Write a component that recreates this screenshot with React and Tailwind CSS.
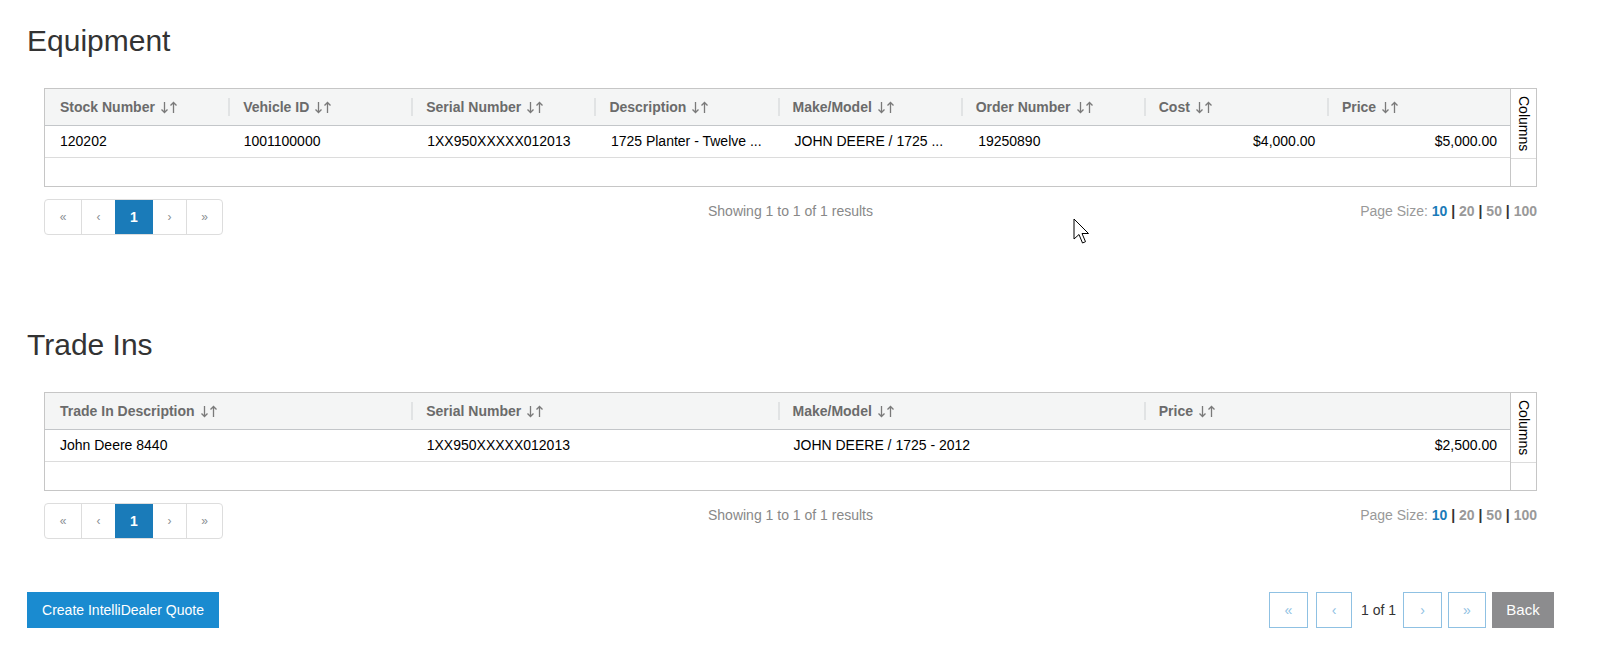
const equipCols = ["Stock Number", "Vehicle ID", "Serial Number", "Description", "Make/Model", "Order Number", "Cost", "Price"];
const equipRow = [
  { v: "120202" },
  { v: "1001100000" },
  { v: "1XX950XXXXX012013" },
  { v: "1725 Planter - Twelve ..." },
  { v: "JOHN DEERE / 1725 ..." },
  { v: "19250890" },
  { v: "$4,000.00", right: true },
  { v: "$5,000.00", right: true },
];

const tradeCols = ["Trade In Description", "Serial Number", "Make/Model", "Price"];
const tradeRow = [
  { v: "John Deere 8440" },
  { v: "1XX950XXXXX012013" },
  { v: "JOHN DEERE / 1725 - 2012" },
  { v: "$2,500.00", right: true },
];

function SortIcon() {
  return (
    <svg className="ml-[5px]" width="18" height="13" viewBox="0 0 18 13" fill="none" stroke="#7a7a7a" strokeWidth="1.3">
      <path d="M4.5 1 V11.5 M1.5 8.5 L4.5 11.5 L7.5 8.5" />
      <path d="M13.5 12 V1.5 M10.5 4.5 L13.5 1.5 L16.5 4.5" />
    </svg>
  );
}

function DataTable({ cols, row }) {
  return (
    <div className="mx-[17px] flex border border-[#c6c6c6]">
      <div className="min-w-0 flex-1">
        <div className="flex h-[37px] border-b border-[#c3c6c9] bg-[#f4f5f5]">
          {cols.map((c, i) => (
            <div key={c} className="flex min-w-0 flex-1 items-center">
              <div
                className={
                  "flex h-[18px] items-center border-l-2 pl-[13px] text-[14px] font-bold text-[#6b6b6b] " +
                  (i === 0 ? "border-transparent" : "border-[#e1e3e4]")
                }
              >
                {c}
                <SortIcon />
              </div>
            </div>
          ))}
        </div>
        <div className="flex h-[32px] border-b border-[#dcdcdc]">
          {row.map((cell, i) => (
            <div
              key={i}
              className={
                "flex min-w-0 flex-1 items-center text-[14px] text-black " +
                (cell.right ? "justify-end pr-[13px]" : "pl-[15px]")
              }
            >
              <span className="whitespace-nowrap">{cell.v}</span>
            </div>
          ))}
        </div>
        <div className="h-[28px]" />
      </div>
      <div className="flex w-[26px] flex-col border-l border-[#c6c6c6]">
        <div className="flex h-[70px] justify-center border-b border-[#dcdcdc] pt-[7px]">
          <span className="text-[14px] leading-none text-black [writing-mode:vertical-rl]">Columns</span>
        </div>
        <div className="flex-1" />
      </div>
    </div>
  );
}

function Pager() {
  const btn = "flex h-[34px] items-center justify-center text-[12px] text-[#8a8f94]";
  return (
    <div className="flex w-fit overflow-hidden rounded-[4px] border border-[#dddddd]">
      <div className={btn + " w-[36px]"}>«</div>
      <div className={btn + " w-[34px] border-l border-[#dddddd]"}>‹</div>
      <div className="flex h-[34px] w-[38px] items-center justify-center bg-[#1a7bb9] text-[14px] font-bold text-white">1</div>
      <div className={btn + " w-[33px]"}>›</div>
      <div className={btn + " w-[36px] border-l border-[#dddddd]"}>»</div>
    </div>
  );
}

function PagerRow() {
  return (
    <div className="mx-[17px] mt-[12px] grid grid-cols-3 items-start">
      <Pager />
      <div className="pt-[2px] text-center text-[14px] text-[#888]">Showing 1 to 1 of 1 results</div>
      <div className="pt-[2px] text-right text-[14px] text-[#999]">
        Page Size: <span className="font-bold text-[#1a7bb9]">10</span>
        <span className="font-bold text-[#333]"> | </span>
        <span className="font-bold">20</span>
        <span className="font-bold text-[#333]"> | </span>
        <span className="font-bold">50</span>
        <span className="font-bold text-[#333]"> | </span>
        <span className="font-bold">100</span>
      </div>
    </div>
  );
}

export default function App() {
  const nav = "flex h-[36px] items-center justify-center border border-[#8fc1e3] text-[14px] text-[#8fc1e3]";
  return (
    <div className="relative min-h-screen bg-white pl-[27px] pr-[48px] pt-[24px] font-['Liberation_Sans',Arial,sans-serif] text-[#333]">
      <h1 className="h-[33px] text-[30px] leading-[33px] text-[#333]">Equipment</h1>
      <div className="mt-[31px]">
        <DataTable cols={equipCols} row={equipRow} />
      </div>
      <PagerRow />

      <h1 className="mt-[93px] h-[33px] text-[30px] leading-[33px] text-[#333]">Trade Ins</h1>
      <div className="mt-[31px]">
        <DataTable cols={tradeCols} row={tradeRow} />
      </div>
      <PagerRow />

      <div className="mt-[53px] flex items-center justify-between">
        <button className="h-[36px] w-[192px] bg-[#1a8bd0] text-[14px] text-white">Create IntelliDealer Quote</button>
        <div className="flex items-center">
          <div className={nav + " w-[39px]"}>«</div>
          <div className={nav + " ml-[8px] w-[36px]"}>‹</div>
          <span className="ml-[9px] mr-[7px] text-[14px] text-[#333]">1 of 1</span>
          <div className={nav + " w-[39px]"}>›</div>
          <div className={nav + " ml-[6px] w-[38px]"}>»</div>
          <button className="ml-[6px] h-[36px] w-[62px] bg-[#8c8c8e] text-[15px] text-white">Back</button>
        </div>
      </div>

      <svg className="absolute left-[1073px] top-[218px]" width="18" height="28" viewBox="0 0 18 28">
        <path d="M1 1 L1 21 L6 16.5 L9.5 25 L12.5 23.7 L9 15.5 L15.5 15.5 Z" fill="white" stroke="black" strokeWidth="1" strokeLinejoin="round" />
      </svg>
    </div>
  );
}
